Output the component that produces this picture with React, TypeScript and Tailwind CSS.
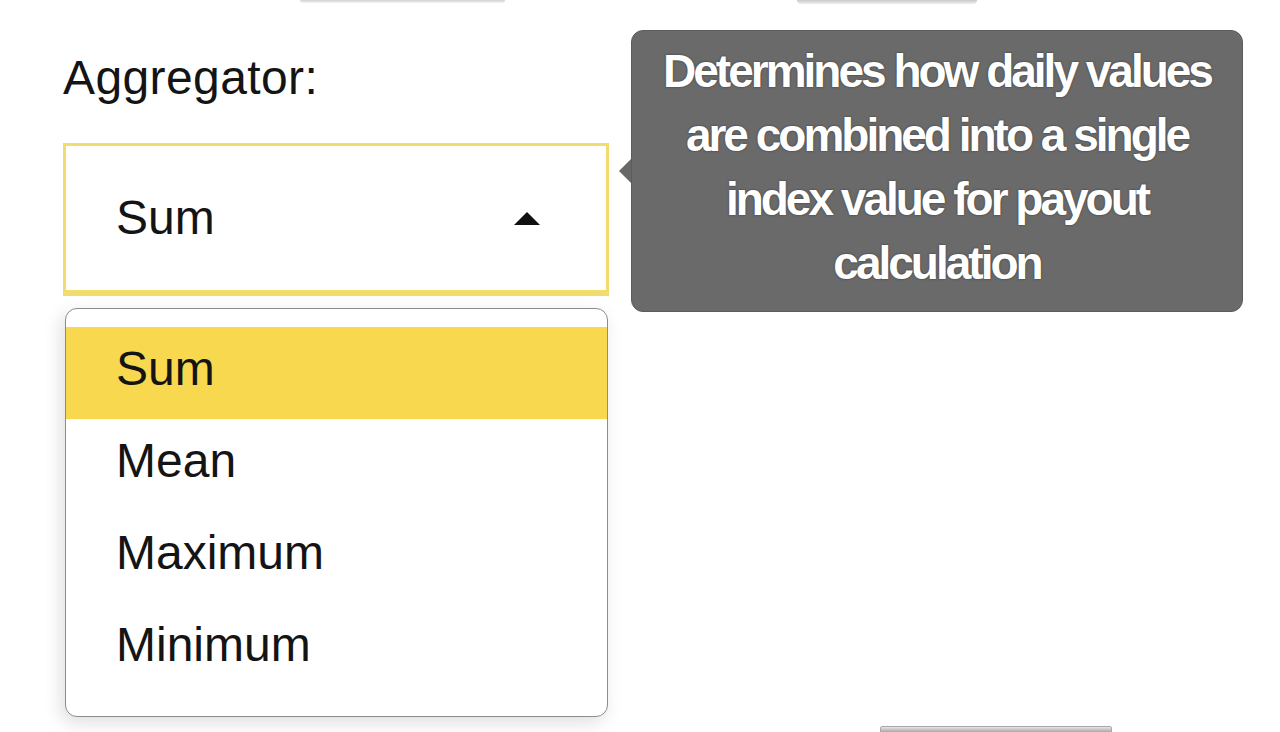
import { useState } from "react";

const options = ["Sum", "Mean", "Maximum", "Minimum"];

export default function App() {
  const [selected, setSelected] = useState("Sum");

  return (
    <div className="h-[732px] w-[1280px] overflow-hidden bg-white font-['Liberation_Sans',Arial,sans-serif] text-[#141414]">
      {/* cut-off bits of the row above */}
      <div className="flex h-[3px]">
        <div className="ml-[300px] h-[3px] w-[205px] rounded-b-full bg-gradient-to-b from-[#d2d2d2] to-[#f4f4f4]" />
        <div className="ml-[292px] h-[4px] w-[180px] rounded-b-full bg-gradient-to-b from-[#c8c8c8] to-[#f0f0f0]" />
      </div>

      <div className="flex">
        {/* Field column */}
        <div className="ml-[63px] w-[546px]">
          <label className="mt-[51px] block text-[48px] leading-[48px] tracking-[0.4px]">Aggregator:</label>

          <button
            type="button"
            className="mt-[41px] flex h-[153px] w-full items-center justify-between border-[3px] border-b-[6px] border-[#f4dc6c] bg-white pl-[50px] pr-[66px] text-left"
          >
            <span className="text-[48px] leading-none">{selected}</span>
            <span className="h-0 w-0 border-x-[13px] border-b-[13px] border-x-transparent border-b-[#111]" />
          </button>

          {/* Open menu */}
          <ul className="mt-[12px] ml-[2px] h-[409px] w-[543px] rounded-[12px] border border-[#8c8c8c] bg-white pt-[18px] shadow-[-4px_6px_18px_rgba(0,0,0,0.13)]">
            {options.map((opt) => (
              <li
                key={opt}
                onClick={() => setSelected(opt)}
                className={`flex h-[92px] items-center pb-[8px] pl-[50px] text-[48px] leading-none ${
                  opt === selected ? "bg-[#f8d84f]" : "bg-white"
                }`}
              >
                {opt}
              </li>
            ))}
          </ul>
        </div>

        {/* Tooltip */}
        <div className="ml-[10px] mt-[27px] flex h-[282px] items-center self-start">
          <span className="h-0 w-0 border-y-[12px] border-r-[12px] border-y-transparent border-r-[#686868]" />
          <div className="flex h-[282px] w-[612px] flex-col items-center rounded-[12px] border border-[#5c5c5c] bg-[#6a6a6a] pt-[8px] text-center">
            <p className="text-[46px] font-bold leading-[64px] tracking-[-3px] text-white [text-shadow:0_0_2px_#2e2e2e]">
              Determines how daily values
              <br />
              are combined into a single
              <br />
              index value for payout
              <br />
              calculation
            </p>
          </div>
        </div>
      </div>

      {/* cut-off button below */}
      <div className="ml-[880px] mt-[9px] h-[8px] w-[232px] rounded-t-[2px] border border-[#a8a8a8] bg-gradient-to-b from-[#e6e6e6] to-[#9c9c9c]" />
    </div>
  );
}
